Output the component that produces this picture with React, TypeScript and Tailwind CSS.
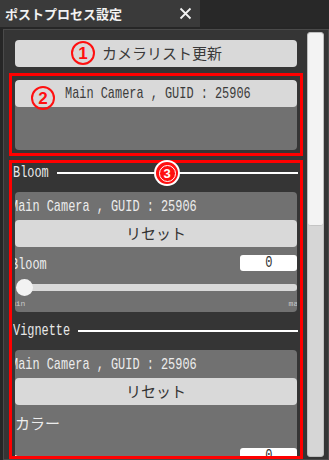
import React from 'react';

const mono = { fontFamily: '"Liberation Mono", "DejaVu Sans Mono", monospace' };

function Circled({ n, className = '' }: { n: string; className?: string }) {
  return (
    <div
      className={`absolute w-[24px] h-[24px] rounded-full border-2 border-[#ff1010] flex items-center justify-center text-[#ff1010] text-[17px] font-semibold leading-none ${className}`}
      style={{ fontFamily: '"Liberation Sans", Arial, sans-serif' }}
    >
      {n}
    </div>
  );
}

// narrow text like the reference's half-width font
function Narrow({ children, className = '' }: { children: React.ReactNode; className?: string }) {
  return (
    <span className={`inline-block text-[17px] leading-none scale-x-[0.7] origin-left whitespace-nowrap ${className}`} style={mono}>
      {children}
    </span>
  );
}

function SectionHeader({ title, lineClass }: { title: string; lineClass: string }) {
  return (
    <div className="h-[19px] shrink-0 flex items-center pl-[1px] pr-[2px]">
      <Narrow className={`text-[#e8e8e8] ${lineClass}`}>{title}</Narrow>
      <div className="h-[2px] bg-white flex-1" />
    </div>
  );
}

function CameraCard({ children }: { children: React.ReactNode }) {
  return (
    <div className="mx-[3px] shrink-0 rounded-[4px] bg-[#717171] overflow-hidden">
      <div className="h-[28px] flex items-center -ml-[4px] text-[#ececec]">
        <Narrow>Main Camera , GUID : 25906</Narrow>
      </div>
      <button className="w-full h-[27px] rounded-[4px] bg-[#d9d9d9] text-[15px] text-[#333] flex items-center justify-center" style={{ fontFamily: '"Noto Sans CJK JP", sans-serif' }}>
        リセット
      </button>
      {children}
    </div>
  );
}

export default function App() {
  return (
    <div className="w-[329px] h-[460px] bg-[#262626] flex flex-col overflow-hidden relative">
      {/* tab bar */}
      <div className="h-[27px] shrink-0 flex">
        <div className="w-[200px] bg-[#3a3a3a] flex items-center justify-between pl-[5px] pr-[7px]">
          <span className="text-[13px] font-bold text-[#f2f2f2]" style={{ fontFamily: '"Noto Sans CJK JP", sans-serif' }}>
            ポストプロセス設定
          </span>
          <svg width="13" height="13" viewBox="0 0 13 13" className="mr-[1px]">
            <path d="M1.5 1.5 L11.5 11.5 M11.5 1.5 L1.5 11.5" stroke="#f2f2f2" strokeWidth="1.8" />
          </svg>
        </div>
        <div className="flex-1 bg-[#282828]" />
      </div>

      {/* panel */}
      <div className="flex-1 min-h-0 overflow-hidden ml-[3px] mt-[2px] border border-[#4a4a4a] bg-[#353535] flex relative">
        <div className="w-[299px] min-h-0 pl-[5px] pt-[10px] flex flex-col">
          {/* refresh button */}
          <button
            className="mx-[6px] h-[27px] shrink-0 rounded-[4px] bg-[#d9d9d9] text-[15px] text-[#3a3a3a] flex items-center justify-center pl-[12px]"
            style={{ fontFamily: '"Noto Sans CJK JP", sans-serif' }}
          >
            カメラリスト更新
          </button>

          {/* camera list */}
          <div className="mt-[6px] h-[83px] shrink-0 border-[3px] border-[#ff0000] p-[3px] pt-[4px]">
            <div className="h-full rounded-[4px] bg-[#717171] overflow-hidden">
              <div className="h-[27px] bg-[#d9d9d9] rounded-[4px] flex items-center pl-[50px] text-[#3c3c3c]">
                <Narrow>Main Camera , GUID : 25906</Narrow>
              </div>
            </div>
          </div>

          {/* effects */}
          <div className="mt-[4px] flex-1 min-h-0 border-[3px] border-[#ff0000] border-b-0 overflow-hidden flex flex-col">
            <SectionHeader title="Bloom" lineClass="w-[44px]" />
            <div className="h-[10px] shrink-0" />
            <CameraCard>
              <div className="h-[32px] flex items-center justify-between">
                <span className="-ml-[4px] text-[#ececec]"><Narrow>Bloom</Narrow></span>
                <div className="w-[57px] h-[16px] bg-white rounded-[3px] flex items-center justify-center text-[#333]">
                  <span className="text-[16px] leading-none scale-x-[0.75]" style={mono}>0</span>
                </div>
              </div>
              <div className="h-[17px] relative flex items-center">
                <div className="absolute left-[8px] right-0 h-[7px] bg-[#d9d9d9] rounded-[3px]" />
                <div className="absolute left-[1px] w-[17px] h-[17px] rounded-full bg-[#f2f2f2]" />
              </div>
              <div className="h-[16px] flex justify-between items-center text-[8px] text-[#c8c8c8] leading-none" style={mono}>
                <span className="-ml-[4px]">min</span>
                <span className="-mr-[6px]">max</span>
              </div>
            </CameraCard>
            <div className="h-[9px] shrink-0" />
            <SectionHeader title="Vignette" lineClass="w-[65px]" />
            <div className="h-[10px] shrink-0" />
            <CameraCard>
              <div className="h-[36px] flex items-center">
                <span className="text-[15px] text-[#ececec]" style={{ fontFamily: '"Noto Sans CJK JP", sans-serif' }}>カラー</span>
              </div>
              <div className="h-[25px] flex items-start justify-between pt-[7px]">
                <span className="-ml-[4px] text-[#ececec]"><Narrow>R</Narrow></span>
                <div className="w-[57px] h-[16px] bg-white rounded-[3px] flex items-center justify-center text-[#333]">
                  <span className="text-[16px] leading-none scale-x-[0.75]" style={mono}>0</span>
                </div>
              </div>
            </CameraCard>
          </div>
          <div className="h-[3px] bg-[#ff0000] shrink-0" />
        </div>

        {/* scrollbar */}
        <div className="ml-[4px] mt-[2px] mb-[2px] w-[17px] rounded-[3px] bg-[#d6d6d6] border border-[#bdbdbd] relative">
          <div className="h-[193px] rounded-[3px] bg-[#f3f3f3] border-b border-[#c4c4c4]" />
        </div>
      </div>

      <Circled n="1" className="left-[71px] top-[41px]" />
      <Circled n="2" className="left-[31px] top-[86px]" />
      <div className="absolute left-[154px] top-[160px] w-[26px] h-[26px] rounded-full bg-white flex items-center justify-center">
        <div className="w-[22px] h-[22px] rounded-full bg-[#ff1010] flex items-center justify-center">
          <div className="w-[17px] h-[17px] rounded-full border-[1.5px] border-white flex items-center justify-center text-white text-[13px] font-bold leading-none" style={{ fontFamily: '"Liberation Sans", Arial, sans-serif' }}>
            3
          </div>
        </div>
      </div>
    </div>
  );
}
